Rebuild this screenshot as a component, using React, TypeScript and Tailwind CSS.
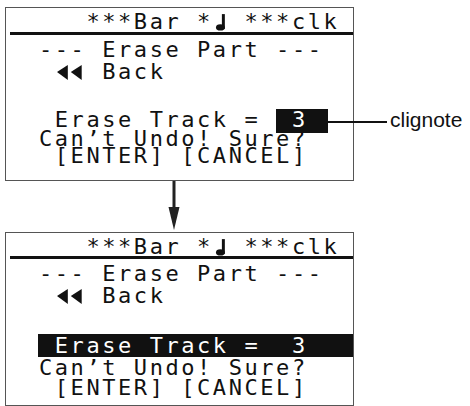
import React from 'react';

const lcd =
  "font-['DejaVu_Sans_Mono',monospace] text-[22px] tracking-[2.56px] whitespace-pre text-[#111]";

const Note = () => (
  <svg width="15.8" height="18" viewBox="0 0 16 18" className="inline-block align-[-2px]">
    <rect x="9" y="1" width="3" height="15" fill="#111" />
    <ellipse cx="7.5" cy="14.5" rx="4.5" ry="3.2" fill="#111" />
  </svg>
);

const Rewind = () => (
  <svg width="31.6" height="18" viewBox="0 0 32 18" className="inline-block align-[-2px]">
    <polygon points="2,9 13,2 13,17" fill="#111" />
    <polygon points="16,9 27,2 27,17" fill="#111" />
  </svg>
);

function Screen({ selected }: { selected: boolean }) {
  return (
    <div className="w-[349px] h-[174px] border border-[#555] flex flex-col">
      <div className={`${lcd} leading-[18px] pl-[33px] mt-[5px]`}>
        {'   ***Bar *'}
        <Note />
        {' ***clk'}
      </div>
      <div className={`h-[3px] bg-[#111] ml-[4px] ${selected ? 'mt-0' : 'mt-[1px]'}`} />
      <div className={`${lcd} leading-[18px] pl-[33px] mt-[6px]`}>--- Erase Part ---</div>
      <div className={`${lcd} leading-[18px] pl-[33px] mt-[4px]`}>
        {' '}
        <Rewind />
        {' Back'}
      </div>
      {selected ? (
        <>
          <div className={`${lcd} leading-[23px] h-[23px] mt-[29px] ml-[32px] pl-[1px] bg-[#111] !text-white`}>
            {' Erase Track =  3'}
          </div>
          <div className={`${lcd} leading-[18px] pl-[33px] mt-[2px]`}>Can’t Undo! Sure?</div>
          <div className={`${lcd} leading-[18px] pl-[33px] mt-[2px]`}>{' [ENTER] [CANCEL]'}</div>
        </>
      ) : (
        <>
          <div className={`${lcd} leading-[22px] h-[24px] mt-[28px] pl-[33px] flex`}>
            <span>{' Erase Track = '}</span>
            <span className="bg-[#111] text-white h-[24px] pr-[4px]">{' 3 '}</span>
          </div>
          <div className={`${lcd} leading-[18px] pl-[33px] mt-[-3px]`}>Can’t Undo! Sure?</div>
          <div className={`${lcd} leading-[18px] pl-[33px] mt-[-1px]`}>{' [ENTER] [CANCEL]'}</div>
        </>
      )}
    </div>
  );
}

export default function App() {
  return (
    <div className="relative w-[470px] h-[406px] bg-white pl-[5px] pt-[7px]">
      <Screen selected={false} />
      <div className="h-[51px] pl-[162px]">
        <svg width="14" height="51" viewBox="0 0 14 51">
          <rect x="5.5" y="0" width="3" height="30" fill="#222" />
          <polygon points="1.5,26 12.5,26 7,49" fill="#222" />
        </svg>
      </div>
      <Screen selected={true} />

      <div className="absolute left-[327px] top-[121px] w-[60px] h-[2px] bg-[#111]" />
      <div className="absolute left-[390px] top-[108px] font-['Liberation_Sans',Arial,sans-serif] text-[21px] leading-[24px] text-[#111]">
        clignote
      </div>
    </div>
  );
}
